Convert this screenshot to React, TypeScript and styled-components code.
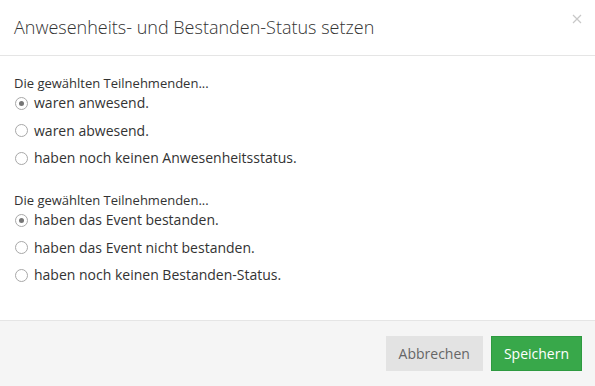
import styled, { createGlobalStyle } from "styled-components";

const Global = createGlobalStyle`
  html, body {
    margin: 0;
    padding: 0;
    background: #fff;
  }
  body {
    font-family: "Open Sans", "Liberation Sans", sans-serif;
    color: #333;
  }
`;

const Modal = styled.div`
  width: 595px;
  height: 386px;
  display: flex;
  flex-direction: column;
  background: #fff;
`;

const Header = styled.div`
  height: 56px;
  box-sizing: border-box;
  display: flex;
  align-items: center;
  justify-content: space-between;
  padding: 0 12px 0 14px;
  border-bottom: 1px solid #e5e5e5;
`;

const Title = styled.h4`
  margin: 0;
  font-size: 18px;
  font-weight: 300;
  color: #333;
  padding-bottom: 2px;
`;

const Close = styled.button`
  border: 0;
  background: none;
  padding: 0;
  margin-top: -17px;
  width: 12px;
  height: 12px;
  display: flex;
  align-items: center;
  justify-content: center;
  cursor: pointer;
`;

const Body = styled.div`
  flex: 1;
  padding: 17px 14px 0 14px;
  font-size: 13px;
`;

const Group = styled.div`
  display: flex;
  flex-direction: column;
  margin-bottom: 22px;
`;

const Label = styled.div`
  line-height: 20px;
  font-size: 13px;
  color: #333;
`;

const Option = styled.label<{ $first?: boolean }>`
  display: flex;
  align-items: center;
  gap: 6px;
  line-height: 20px;
  font-size: 14px;
  margin-top: ${(p) => (p.$first ? "0" : "7.5px")};
  color: #333;
  cursor: pointer;
`;

const Radio = styled.span<{ $checked?: boolean }>`
  width: 11px;
  height: 11px;
  border-radius: 50%;
  border: 1px solid #a8a8a8;
  background: #fff;
  display: flex;
  align-items: center;
  justify-content: center;
  margin-left: 1px;

  &::after {
    content: "";
    width: 5px;
    height: 5px;
    border-radius: 50%;
    background: #767676;
    display: ${(p) => (p.$checked ? "block" : "none")};
  }
`;

const Footer = styled.div`
  height: 66px;
  box-sizing: border-box;
  border-top: 1px solid #e5e5e5;
  background: #f5f5f5;
  display: flex;
  align-items: center;
  justify-content: flex-end;
  gap: 8px;
  padding: 0 13px 0 15px;
`;

const Button = styled.button<{ $primary?: boolean }>`
  height: 35px;
  box-sizing: border-box;
  padding: 0 12px;
  font-family: "Open Sans", "Liberation Sans", sans-serif;
  font-size: 14px;
  border: 1px solid ${(p) => (p.$primary ? "#2e9a40" : "#e3e3e3")};
  background: ${(p) => (p.$primary ? "#38a84a" : "#e3e3e3")};
  color: ${(p) => (p.$primary ? "#fff" : "#666")};
  cursor: pointer;
`;

const groups = [
  {
    name: "presence",
    options: [
      "waren anwesend.",
      "waren abwesend.",
      "haben noch keinen Anwesenheitsstatus.",
    ],
  },
  {
    name: "passed",
    options: [
      "haben das Event bestanden.",
      "haben das Event nicht bestanden.",
      "haben noch keinen Bestanden-Status.",
    ],
  },
];

export default function App() {
  return (
    <>
      <Global />
      <Modal>
        <Header>
          <Title>Anwesenheits- und Bestanden-Status setzen</Title>
          <Close aria-label="Schließen">
            <svg width="10" height="10" viewBox="0 0 10 10">
              <path d="M1 1L9 9M9 1L1 9" stroke="#c8c8c8" strokeWidth="1.2" />
            </svg>
          </Close>
        </Header>
        <Body>
          {groups.map((g) => (
            <Group key={g.name}>
              <Label>Die gewählten Teilnehmenden...</Label>
              {g.options.map((o, i) => (
                <Option key={o} $first={i === 0}>
                  <Radio $checked={i === 0} />
                  {o}
                </Option>
              ))}
            </Group>
          ))}
        </Body>
        <Footer>
          <Button>Abbrechen</Button>
          <Button $primary>Speichern</Button>
        </Footer>
      </Modal>
    </>
  );
}
